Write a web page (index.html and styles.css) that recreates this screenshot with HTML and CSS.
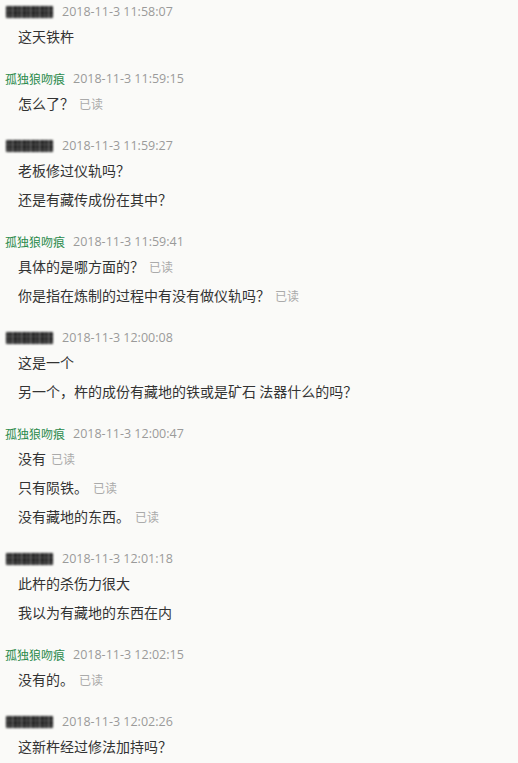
FILE: index.html
```html
<!DOCTYPE html>
<html lang="zh-CN">
<head>
<meta charset="utf-8">
<title>聊天记录</title>
<link rel="stylesheet" href="styles.css">
</head>
<body>
<div class="log">
  <div class="group">
    <div class="head"><span class="blur"></span><span class="time">2018-11-3 11:58:07</span></div>
    <div class="line">这天铁杵</div>
  </div>
  <div class="group">
    <div class="head"><span class="name">孤独狼吻痕</span><span class="time">2018-11-3 11:59:15</span></div>
    <div class="line">怎么了？<span class="read">已读</span></div>
  </div>
  <div class="group">
    <div class="head"><span class="blur"></span><span class="time">2018-11-3 11:59:27</span></div>
    <div class="line">老板修过仪轨吗？</div>
    <div class="line">还是有藏传成份在其中？</div>
  </div>
  <div class="group">
    <div class="head"><span class="name">孤独狼吻痕</span><span class="time">2018-11-3 11:59:41</span></div>
    <div class="line">具体的是哪方面的？<span class="read">已读</span></div>
    <div class="line">你是指在炼制的过程中有没有做仪轨吗？<span class="read">已读</span></div>
  </div>
  <div class="group">
    <div class="head"><span class="blur"></span><span class="time">2018-11-3 12:00:08</span></div>
    <div class="line">这是一个</div>
    <div class="line">另一个，杵的成份有藏地的铁或是矿石 法器什么的吗？</div>
  </div>
  <div class="group">
    <div class="head"><span class="name">孤独狼吻痕</span><span class="time">2018-11-3 12:00:47</span></div>
    <div class="line">没有<span class="read">已读</span></div>
    <div class="line">只有陨铁。<span class="read">已读</span></div>
    <div class="line">没有藏地的东西。<span class="read">已读</span></div>
  </div>
  <div class="group">
    <div class="head"><span class="blur"></span><span class="time">2018-11-3 12:01:18</span></div>
    <div class="line">此杵的杀伤力很大</div>
    <div class="line">我以为有藏地的东西在内</div>
  </div>
  <div class="group">
    <div class="head"><span class="name">孤独狼吻痕</span><span class="time">2018-11-3 12:02:15</span></div>
    <div class="line">没有的。<span class="read">已读</span></div>
  </div>
  <div class="group">
    <div class="head"><span class="blur"></span><span class="time">2018-11-3 12:02:26</span></div>
    <div class="line">这新杵经过修法加持吗？</div>
  </div>
</div>
</body>
</html>
```
FILE: styles.css
```css
html, body {
  margin: 0;
  padding: 0;
  background: #fafaf8;
}
body {
  font-family: "Noto Sans CJK SC", "Noto Sans", sans-serif;
  color: #333;
}
.log {
  padding-top: 1px;
}
.group {
  margin-bottom: 16px;
}
.head {
  display: flex;
  align-items: center;
  height: 22px;
  padding-left: 5px;
}
.blur {
  display: inline-block;
  width: 47px;
  height: 12px;
  margin-left: 1px;
  margin-right: 9px;
  background:
    repeating-linear-gradient(0deg, transparent 0 2px, rgba(120,120,120,0.45) 2px 3px, transparent 3px 5px),
    repeating-linear-gradient(90deg, #1c1c1c 0 2px, #5a5a5a 2px 3px, #262626 3px 6px, #777 6px 7px, #303030 7px 9px),
    #222;
  filter: blur(0.8px);
  border-radius: 1px;
}
.name {
  font-size: 12px;
  color: #2a8a4c;
  margin-right: 8px;
  line-height: 22px;
}
.time {
  font-family: "Open Sans", "Liberation Sans", sans-serif;
  font-size: 12.5px;
  color: #9a9a9a;
  line-height: 22px;
}
.line {
  height: 29px;
  line-height: 27px;
  padding-left: 18px;
  font-size: 14px;
  color: #333;
  white-space: nowrap;
}
.read {
  font-size: 12px;
  color: #aaa;
  margin-left: 5px;
}
```
